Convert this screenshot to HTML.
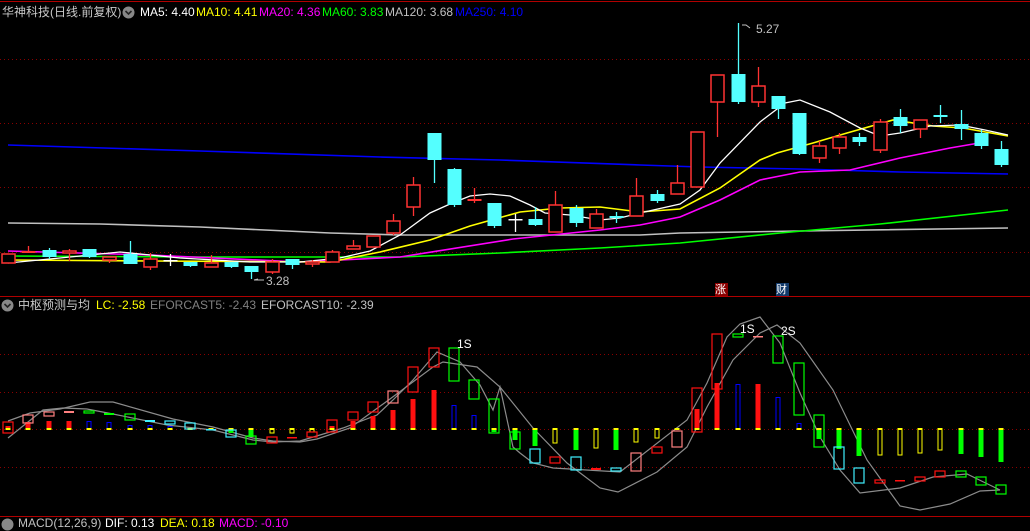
<!DOCTYPE html>
<html><head><meta charset="utf-8"><style>
html,body{margin:0;padding:0;background:#000;width:1030px;height:525px;overflow:hidden}
svg{position:absolute;left:0;top:0}
.t{position:absolute;font-family:"Liberation Sans","Noto Sans CJK SC",sans-serif;font-size:12px;white-space:nowrap;line-height:14px}
</style></head><body>
<svg id="s" width="1030" height="525" xmlns="http://www.w3.org/2000/svg">
<line x1="0" y1="1.5" x2="1030" y2="1.5" stroke="#b00000" stroke-width="1"/>
<line x1="0" y1="296.5" x2="1030" y2="296.5" stroke="#b00000"/>
<line x1="0" y1="516.5" x2="1030" y2="516.5" stroke="#b00000"/>
<g stroke="#8a0000" stroke-dasharray="1 3">
<line x1="0" y1="59.5" x2="1030" y2="59.5"/><line x1="0" y1="123.5" x2="1030" y2="123.5"/>
<line x1="0" y1="187.5" x2="1030" y2="187.5"/><line x1="0" y1="252.5" x2="1030" y2="252.5"/>
<line x1="0" y1="354.5" x2="1030" y2="354.5"/><line x1="0" y1="392.5" x2="1030" y2="392.5"/>
<line x1="0" y1="429.5" x2="1030" y2="429.5"/><line x1="0" y1="467.5" x2="1030" y2="467.5"/>
</g>
<g fill="none" stroke-width="1.3">
<polyline stroke="#0000ff" stroke-width="1.6" points="8,145 200,151 380,157 500,160 640,165 700,167 800,169 900,172 1008,174"/>
<polyline stroke="#c0c0c0" stroke-width="1.6" points="8,223 100,224 200,227 330,233 400,235 640,235 680,233 800,231 1008,228"/>
<polyline stroke="#00ff00" stroke-width="1.6" points="8,256 200,257 400,257 500,253 600,248 680,243 780,233 880,224 1008,210"/>
<polyline stroke="#ff00ff" stroke-width="1.6" points="8,251 150,255 300,262 400,257 513,239 600,230 640,225 680,217 720,200 760,180 800,172 850,170 900,158 950,148 985,142"/>
<polyline stroke="#ffff00" stroke-width="1.6" points="8,260 150,261 330,262 380,252 430,240 470,226 520,212 560,208 600,207 640,212 680,209 720,188 760,160 777,153 813,143 847,133 893,120 933,126 963,128 1008,136"/>
<polyline stroke="#ffffff" stroke-width="1.3" points="8,263 60,258 120,252 180,258 250,262 300,262 340,258 370,251 400,235 430,213 450,204 470,196 490,194 510,196 530,205 545,213 570,215 600,220 620,218 640,213 680,204 700,190 720,163 760,122 785,103 800,100 830,112 860,128 880,136 900,133 930,126 960,125 985,130 1008,135"/>
</g>
<g id="cd"></g>
<polyline points="742,25 746,25 750,28" fill="none" stroke="#c0c0c0"/>
<polyline points="258,279 254,280 264,280" fill="none" stroke="#c0c0c0"/>
<rect x="715" y="283" width="13" height="13" fill="#8b0000"/>
<rect x="776" y="283" width="13" height="13" fill="#123a6a"/>
<g fill="none" stroke="#8c8c8c" stroke-width="1.2">
<polyline points="8,438 43,410 63,408 87,409 113,414 167,425 213,430 233,435 253,440 273,442 300,441 320,435 343,428 377,415 393,400 413,380 437,352 460,362 480,385 493,410 500,387 513,447 520,453 533,463 553,468 620,472 687,420 707,383 727,337 740,324 760,317 780,343 800,393 820,437 840,470 860,493 900,488 933,477 967,474 1000,490"/>
<polyline points="8,421 30,413 60,409 90,402 113,402 173,419 213,427 253,438 273,441 300,442 317,439 350,428 390,399 433,367 443,362 477,367 500,387 533,428 567,463 600,488 618,492 657,472 687,447 707,407 733,360 760,333 777,325 800,343 833,390 867,460 900,506 920,510 950,504 980,491 1000,490"/>
</g>
<g id="ld"></g>
</svg>
<div class="t" style="left:2px;top:5px;color:#c8c8c8">华神科技(日线.前复权)</div>
<svg style="position:absolute;left:122px;top:6px" width="13" height="13"><circle cx="6.5" cy="6.5" r="6" fill="#888"/><polyline points="3.5,5 6.5,8 9.5,5" fill="none" stroke="#222" stroke-width="1.6"/></svg>
<div class="t" style="left:140px;top:5px;color:#fff">MA5: 4.40</div>
<div class="t" style="left:196px;top:5px;color:#ffff00">MA10: 4.41</div>
<div class="t" style="left:259px;top:5px;color:#ff00ff">MA20: 4.36</div>
<div class="t" style="left:322px;top:5px;color:#00ff00">MA60: 3.83</div>
<div class="t" style="left:385px;top:5px;color:#c0c0c0">MA120: 3.68</div>
<div class="t" style="left:455px;top:5px;color:#0000ff">MA250: 4.10</div>
<div class="t" style="left:756px;top:22px;color:#c0c0c0">5.27</div>
<div class="t" style="left:266px;top:274px;color:#c0c0c0">3.28</div>
<div class="t" style="left:715px;top:283px;color:#fff;font-size:11px">涨</div>
<div class="t" style="left:776px;top:283px;color:#fff;font-size:11px">财</div>
<svg style="position:absolute;left:1px;top:299px" width="13" height="13"><circle cx="6.5" cy="6.5" r="6" fill="#888"/><polyline points="3.5,5 6.5,8 9.5,5" fill="none" stroke="#222" stroke-width="1.6"/></svg>
<div class="t" style="left:18px;top:298px;color:#c8c8c8">中枢预测与均</div>
<div class="t" style="left:96px;top:298px;color:#ffff00">LC: -2.58</div>
<div class="t" style="left:150px;top:298px;color:#808080">EFORCAST5: -2.43</div>
<div class="t" style="left:261px;top:298px;color:#c0c0c0">EFORCAST10: -2.39</div>
<div class="t" style="left:457px;top:337px;color:#fff">1S</div>
<div class="t" style="left:740px;top:322px;color:#fff">1S</div>
<div class="t" style="left:781px;top:324px;color:#fff">2S</div>
<svg style="position:absolute;left:1px;top:518px" width="13" height="13"><circle cx="6.5" cy="6.5" r="6" fill="#888"/></svg>
<div class="t" style="left:18px;top:516px;color:#c0c0c0">MACD(12,26,9)</div>
<div class="t" style="left:105px;top:516px;color:#fff">DIF: 0.13</div>
<div class="t" style="left:160px;top:516px;color:#ffff00">DEA: 0.18</div>
<div class="t" style="left:219px;top:516px;color:#ff00ff">MACD: -0.10</div>
<script>
var NS="http://www.w3.org/2000/svg";
function el(p,t,a){var e=document.createElementNS(NS,t);for(var k in a)e.setAttribute(k,a[k]);p.appendChild(e);return e;}
function X(i){return Math.round(8+20.27*i);}
var C=[[254,263,254,263,'r'],[251,253,246,253,'rf'],[250,257,248,259,'c'],[251,253,249,261,'r'],[249,257,249,258,'c'],[257,260,257,263,'r'],[254,264,241,264,'c'],[259,267,253,270,'r'],[260,260,254,266,'w'],[262,266,262,267,'c'],[263,267,255,267,'r'],[262,267,262,268,'c'],[266,272,266,279,'c'],[262,272,259,274,'r'],[259,265,259,269,'c'],[262,264,260,267,'r'],[252,262,250,262,'r'],[246,249,240,249,'r'],[236,247,236,247,'r'],[221,233,214,235,'r'],[185,207,177,216,'r'],[133,160,133,183,'c'],[169,205,168,207,'c'],[199,201,188,203,'rf'],[203,226,203,228,'c'],[219,219,214,232,'w'],[219,225,207,226,'c'],[205,232,191,232,'r'],[208,223,205,227,'c'],[214,228,209,228,'r'],[216,218,212,223,'c'],[196,216,178,216,'r'],[194,201,190,203,'c'],[183,194,165,194,'r'],[132,187,132,187,'r'],[75,102,75,137,'r'],[74,102,23,104,'c'],[86,102,67,107,'r'],[96,109,96,119,'c'],[113,154,113,155,'c'],[146,158,141,163,'r'],[137,148,133,154,'r'],[137,142,133,146,'c'],[122,150,119,153,'r'],[117,126,109,133,'c'],[120,129,120,138,'r'],[115,117,105,123,'c'],[124,129,110,140,'c'],[133,146,130,149,'c'],[149,165,141,167,'c']];
var g=document.getElementById('cd');
C.forEach(function(c,i){var x=X(i)+0.5;var col=c[4]=='c'?'#54ffff':(c[4]=='w'?'#ffffff':'#ff3232');
el(g,'line',{x1:x,y1:c[2],x2:x,y2:c[3],stroke:col,'stroke-width':1.3});
var h=Math.max(c[1]-c[0],1.5);
if(c[4]=='r')el(g,'rect',{x:x-6.5,y:c[0],width:13,height:h,fill:'#000',stroke:col,'stroke-width':1.5});
else el(g,'rect',{x:x-7,y:c[0],width:14,height:h,fill:col});});
var H=[[426,'r'],[422,'r'],[421,'r'],[421,'r'],[421,'b'],[422,'b'],[425,'b'],[425,'b'],[426,'b'],[429,'y'],[429,'y'],[433,'g'],[437,'g'],[433,'yh'],[433,'yh'],[432,'yh'],[426,'r'],[421,'r'],[416,'r'],[410,'r'],[399,'r'],[390,'r'],[405,'b'],[415,'b'],[432,'g'],[440,'g'],[446,'g'],[443,'yh'],[450,'g'],[448,'yh'],[450,'g'],[442,'yh'],[438,'yh'],[429,'y'],[409,'r'],[383,'r'],[384,'b'],[384,'r'],[397,'b'],[423,'b'],[439,'g'],[449,'g'],[456,'g'],[455,'yh'],[455,'yh'],[453,'yh'],[450,'yh'],[454,'g'],[457,'g'],[462,'g']];
var B=[[422,433,'r'],[415,423,'p'],[412,416,'p'],[411,413,'p',1],[411,413,'g'],[413,415,'g',1],[414,420,'g'],[420,422,'c',1],[421,424,'c'],[423,429,'c'],[429,430,'c',1],[430,437,'c'],[436,444,'g'],[437,443,'r'],[437,438,'r',1],[432,437,'r'],[420,432,'r'],[412,420,'r'],[402,412,'r'],[391,403,'p'],[367,392,'r'],[348,367,'r'],[348,381,'g'],[380,399,'g'],[399,433,'g'],[432,449,'g'],[449,463,'c'],[457,463,'r'],[457,470,'c'],[468,470,'r',1],[468,471,'c'],[453,471,'p'],[447,453,'r'],[431,447,'p'],[388,432,'r'],[334,389,'r'],[334,337,'g'],[336,337,'p',1],[336,363,'g'],[363,415,'g'],[415,447,'g'],[447,469,'c'],[468,483,'c'],[480,483,'r'],[480,481,'r',1],[477,481,'r'],[471,477,'r'],[471,477,'g'],[477,485,'g'],[485,494,'g']];
var CC={r:'#ff1010',p:'#ff8080',g:'#00ff00',c:'#40f0ff',b:'#0000ff',y:'#ffff00',yh:'#ffff00'};
var l=document.getElementById('ld');
H.forEach(function(h,i){var x=X(i);var t=h[1];var y0=Math.min(h[0],429),y1=Math.max(h[0],429);
if(t=='r'||t=='g')el(l,'rect',{x:x-2.5,y:y0,width:5,height:Math.max(y1-y0,1),fill:CC[t]});
else if(t=='b'||t=='yh'){if(y1-y0>0)el(l,'rect',{x:x-2,y:y0+0.5,width:4,height:y1-y0-0.5,fill:'none',stroke:CC[t],'stroke-width':1});}
el(l,'rect',{x:x-2.5,y:428,width:5,height:2,fill:'#ffff00'});});
B.forEach(function(b,i){var x=X(i);var h=Math.max(b[1]-b[0],1.5);
if(b[3])el(l,'rect',{x:x-5,y:b[0],width:10,height:h,fill:CC[b[2]]});
else el(l,'rect',{x:x-5,y:b[0],width:10,height:h,fill:'none',stroke:CC[b[2]],'stroke-width':1.2});});
</script>
</body></html>
